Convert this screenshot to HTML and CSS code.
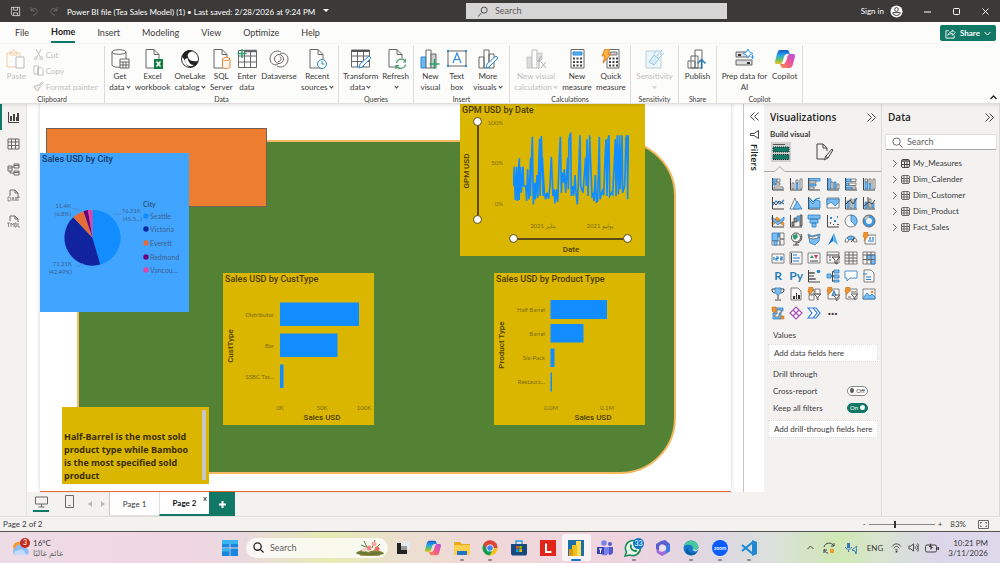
FILE: index.html
```html
<!DOCTYPE html>
<html lang="en">
<head>
    <meta charset="UTF-8">
    <meta name="viewport" content="width=device-width, initial-scale=1.0">
    <title>Power BI file (Tea Sales Model) (1)</title>
    <link rel="stylesheet" href="styles.css">
</head>
<body>
    <!-- Title bar -->
    <header class="titlebar">
        <div class="quick">
            <button aria-label="Save"><svg class="i11" viewBox="0 0 16 16"><path class="lw" d="M2 2h12v12H4l-2-2zM5 2v4h6V2M5 14v-4h6v4"/></svg></button>
            <button aria-label="Undo"><svg class="i11 dim" viewBox="0 0 16 16"><path class="lw" d="M3 2v5h5M3 7c3-5 9-4 9 1 0 2-3 4-6 6"/></svg></button>
            <button aria-label="Redo"><svg class="i11 dim" viewBox="0 0 16 16"><path class="lw" d="M13 2v5H8M13 7c-3-5-9-4-9 1 0 2 3 4 6 6"/></svg></button>
            <span class="file-name">Power BI file (Tea Sales Model) (1) • Last saved: 2/28/2026 at 9:24 PM</span>
            <svg class="i6" viewBox="0 0 6 6"><path fill="#fff" d="M0 1h6L3 4z"/></svg>
        </div>
        <label class="top-search">
            <svg class="i11" viewBox="0 0 12 12"><path class="lg" d="M5 7.500L1 11.500M4.500 4.500a3.300 3.300 0 1 0 6.600 0a3.300 3.300 0 1 0-6.600 0"/></svg>
            <input type="text" placeholder="Search" aria-label="Search">
        </label>
        <div class="window-tools">
            <button class="signin">Sign in
                <svg class="i13" viewBox="0 0 14 14"><circle cx="7" cy="7" r="6.500" fill="#fff"/><circle cx="7" cy="4.800" r="2" fill="none" stroke="#333"/><path fill="none" stroke="#333" d="M3 8.200h8c0 4-8 4-8 0z"/></svg>
            </button>
            <button aria-label="Minimize"><svg class="i9" viewBox="0 0 9 9"><path class="lw" d="M1 5h7"/></svg></button>
            <button aria-label="Maximize"><svg class="i9" viewBox="0 0 9 9"><rect class="lw" x="1.500" y="1.500" width="6" height="6" rx="1"/></svg></button>
            <button aria-label="Close"><svg class="i9" viewBox="0 0 9 9"><path class="lw" d="M1.500 1.500l6 6M7.500 1.500l-6 6"/></svg></button>
        </div>
    </header>

    <!-- Menu tabs -->
    <nav class="menu">
        <button>File</button>
        <button class="active">Home</button>
        <button>Insert</button>
        <button>Modeling</button>
        <button>View</button>
        <button>Optimize</button>
        <button>Help</button>
        <button class="share">
            <svg class="i11" viewBox="0 0 12 12"><path fill="none" stroke="#fff" d="M4 3H1v8h9V8M3 8c1-3 3-4 5-4V2l3 3-3 3V6C6 6 4 7 3 8z"/></svg>
            Share
            <svg class="i7" viewBox="0 0 7 7"><path fill="none" stroke="#fff" d="M.5 2l3 3 3-3"/></svg>
        </button>
    </nav>

    <!-- Ribbon -->
    <section class="ribbon">
        <div class="group g-clip off">
            <div class="items">
                <button class="tool">
                    <svg class="i20" viewBox="0 0 20 20"><path fill="none" stroke="#f0cfa8" d="M10 18H1V4h13v4M4 6V3h2c0-3 3-3 3 0h2v3z"/><path fill="#fff" stroke="#bbb" d="M10 8h8v11h-8z"/></svg>
                    Paste
                </button>
                <div class="mini">
                    <button><svg class="i11" viewBox="0 0 12 12"><path fill="none" stroke="#bbb" d="M3 0l5 9M9 0L4 9"/><circle cx="3" cy="10" r="1.500" fill="none" stroke="#bbb"/><circle cx="9" cy="10" r="1.500" fill="none" stroke="#bbb"/></svg>Cut</button>
                    <button><svg class="i11" viewBox="0 0 12 12"><path fill="#fff" stroke="#bbb" d="M1 1h5v9H1zM5 3h4l2 2v6H5z"/></svg>Copy</button>
                    <button><svg class="i11" viewBox="0 0 12 12"><path fill="#eee" stroke="#bbb" d="M7 4l3-3 1 1-3 3zM1 6l5-2 2 2-3 5z"/><path fill="none" stroke="#f0c8a8" d="M1 7l4 4"/></svg>Format painter</button>
                </div>
            </div>
            <h2>Clipboard</h2>
        </div>
        <div class="group g-data">
            <div class="items">
                <button class="tool">
                    <svg class="i20" viewBox="0 0 20 20"><path class="l" d="M2 3v13c0 3 14 3 14 0V3"/><ellipse class="l" cx="9" cy="3" rx="7" ry="2.300"/><path class="w" d="M10 10h9v9h-9zM10 13h9M10 16h9M13 13v6M16 13v6"/></svg>
                    Get<br>data<i class="v"></i>
                </button>
                <button class="tool">
                    <svg class="i20" viewBox="0 0 20 20"><path class="w" d="M3 .5h8l5 5V19H3zM11 .5v5h5"/><path fill="#107c41" d="M11 10h9v10h-9z"/><path stroke="#fff" stroke-width="1.500" d="M13.500 12.500l4 5M17.500 12.500l-4 5"/></svg>
                    Excel<br>workbook
                </button>
                <button class="tool">
                    <svg class="i20" viewBox="0 0 20 20"><circle cx="10" cy="10" r="8.500" fill="#fff" stroke="#333"/><path fill="#222" d="M2 8C3 2 9 0 13 2 9 3 7 5 8 8c1 4 5 5 10 4-1 5-5 7-8 6-4 0-4-7-8-10z"/><path fill="#fff" d="M5 10c2-1 3-1 3 1 1 3 3 5 6 5-4 3-9 0-9-6z"/></svg>
                    OneLake<br>catalog<i class="v"></i>
                </button>
                <button class="tool">
                    <svg class="i20" viewBox="0 0 20 20"><path class="w" d="M3 .5h8l5 5V19H3zM11 .5v5h5"/><path fill="#fdf3e8" stroke="#e08a3c" d="M11.500 10v8c0 2 7.500 2 7.500 0v-8"/><ellipse cx="15.200" cy="10" rx="3.700" ry="1.500" fill="#fff" stroke="#e08a3c"/></svg>
                    SQL<br>Server
                </button>
                <button class="tool">
                    <svg class="i20" viewBox="0 0 20 20"><path class="w" d="M1.500 1.500h18v17h-18zM1.500 7h18M1.500 13h18M7.500 1.500v17M13.500 1.500v17"/><path d="M7.500 2h12" stroke="#666" stroke-width="2.500"/><path d="M5 0v9M.5 4.500h9" stroke="#2aa56b" stroke-width="1.500"/></svg>
                    Enter<br>data
                </button>
                <button class="tool">
                    <svg class="i20" viewBox="0 0 20 20"><path class="l" d="M12 3C7 0 1 4 1 10c0 5 6 8 9 4M8 17c5 3 11-1 11-7 0-5-6-8-9-4"/><circle class="l" cx="10" cy="10" r="4.500"/><path class="l" d="M11 7.500c2 2 1 5-2 5"/></svg>
                    Dataverse
                </button>
                <button class="tool">
                    <svg class="i20" viewBox="0 0 20 20"><path class="w" d="M3 .5h8l5 5V19H3zM11 .5v5h5"/><circle cx="15" cy="15" r="4.500" fill="#fff" stroke="#2b88a8"/><path d="M15 12v3h2.500" fill="none" stroke="#2b88a8"/></svg>
                    Recent<br>sources<i class="v"></i>
                </button>
            </div>
            <h2>Data</h2>
        </div>
        <div class="group g-queries">
            <div class="items">
                <button class="tool">
                    <svg class="i20" viewBox="0 0 20 20"><path class="w" d="M.5 1h18v17H.5zM.5 7h18M.5 12.500h18M6.500 1v17M12.500 1v17"/><path d="M.5 2h18" stroke="#555" stroke-width="2"/><path fill="#fff" stroke="#2b88d8" d="M8 19l1-4 9-8 2 2-9 9z"/></svg>
                    Transform<br>data<i class="v"></i>
                </button>
                <button class="tool">
                    <svg class="i20" viewBox="0 0 20 20"><path class="w" d="M3 .5h8l5 5V18H3zM11 .5v5h5"/><circle cx="15" cy="14.500" r="5.500" fill="#fcfcfb"/><path d="M10.500 14c1-5 8-5 9-1M20 9.500V13h-3M19.500 15.500c-1 5-8 5-9 1M10 20v-3.500h3" fill="none" stroke="#4a9d6b" stroke-width="1.200"/></svg>
                    Refresh<br><i class="v"></i>
                </button>
            </div>
            <h2>Queries</h2>
        </div>
        <div class="group g-insert">
            <div class="items">
                <button class="tool">
                    <svg class="i20" viewBox="0 0 20 20"><path fill="#6cb8f0" stroke="#2b88d8" d="M1 8h5v11H1z"/><path class="w" d="M6 1h5v18H6z"/><path fill="#ccc" stroke="#666" d="M11 5h5v14h-5z"/><path d="M14.500 10v10M9.500 15h10" stroke="#2aa56b" stroke-width="1.500"/></svg>
                    New<br>visual
                </button>
                <button class="tool">
                    <svg class="i20" viewBox="0 0 20 20"><path class="w" d="M1 2h18v15H1z"/><path d="M6 14l4-10 4 10M7.500 10.500h5" fill="none" stroke="#2b88d8" stroke-width="1.200"/><path fill="#2b88d8" d="M0 1h2v2H0zM18 1h2v2h-2zM0 16h2v2H0zM18 16h2v2h-2z"/></svg>
                    Text<br>box
                </button>
                <button class="tool">
                    <svg class="i20" viewBox="0 0 20 20"><path class="w" d="M1 8h5v11H1zM6 1h5v18H6zM11 5h5v14h-5z"/><path fill="#fff" stroke="#2b88d8" d="M8 19l1-4 9-8 2 2-9 9z"/></svg>
                    More<br>visuals<i class="v"></i>
                </button>
            </div>
            <h2>Insert</h2>
        </div>
        <div class="group g-calc">
            <div class="items">
                <button class="tool off">
                    <svg class="i20" viewBox="0 0 20 20"><path fill="#ddd" stroke="#c8c8c8" d="M1 8h5v11H1z"/><path fill="#fff" stroke="#bbb" d="M6 1h5v18H6z"/><path fill="#ddd" stroke="#c8c8c8" d="M11 4h5v7h-5z"/><path fill="none" stroke="#aaa" d="M16 8c-3-1-3 3-3 11-1 2-2 1-2 1M11 12h4M15 13l5 6M20 13l-5 6"/></svg>
                    New visual<br>calculation<i class="v"></i>
                </button>
                <button class="tool">
                    <svg class="i20" viewBox="0 0 20 20"><path class="w" d="M4 .5h13V19H4z"/><path fill="#59b0f0" stroke="#2b88d8" d="M6 3h9v3H6z"/><path stroke="#444" stroke-width="2" stroke-dasharray="2 1.500" d="M6 9.500h9M6 13h9M6 16.500h9"/></svg>
                    New<br>measure
                </button>
                <button class="tool">
                    <svg class="i20" viewBox="0 0 20 20"><path class="w" d="M6 .5h12V19H6z"/><path fill="#ccc" stroke="#777" d="M9 3h7v3H9z"/><path stroke="#444" stroke-width="2" stroke-dasharray="2 1.500" d="M8 9.500h9M8 13h9M8 16.500h9"/><path fill="#fbb040" stroke="#e07b20" d="M4 0h5L7 5h3l-8 9 2-7H1z"/></svg>
                    Quick<br>measure
                </button>
            </div>
            <h2>Calculations</h2>
        </div>
        <div class="group g-sens">
            <div class="items">
                <button class="tool off">
                    <svg class="i20" viewBox="0 0 20 20"><path fill="#eef5f8" stroke="#bcd0da" d="M2 2h15v17H2z"/><path fill="#d6ecf7" stroke="#98c8e2" d="M5 13l5-7 5 4-5 6zM10 5l3-4M13 7l5-6M15 9l5-5"/></svg>
                    Sensitivity<br><i class="v"></i>
                </button>
            </div>
            <h2>Sensitivity</h2>
        </div>
        <div class="group g-share">
            <div class="items">
                <button class="tool">
                    <svg class="i20" viewBox="0 0 20 20"><path class="w" d="M8 1h7v18H8zM4 7h7v12H4zM1 12h7v7H1z"/><path d="M14.500 20v-9M10.500 14.500l4-4 4 4" fill="none" stroke="#2b7cb8" stroke-width="1.500"/></svg>
                    Publish
                </button>
            </div>
            <h2>Share</h2>
        </div>
        <div class="group g-copilot">
            <div class="items">
                <button class="tool">
                    <svg class="i20" viewBox="0 0 20 20"><path fill="#ddd" stroke="#666" d="M2 3h13v5H2zM2 11h16v5H2z"/><path fill="#333" d="M4 5h3v2H4zM13 13h3v2h-3z"/><path fill="#fff" stroke="#3a9be0" d="M14 0l1.500 3L19 4.500 15.500 6 14 9l-1.500-3L9 4.500 12.500 3zM18.500 6v4M16.500 8h4"/></svg>
                    Prep data for<br>AI
                </button>
                <button class="tool">
                    <svg class="i20" viewBox="0 0 20 20"><use href="#copilot"/></svg>
                    Copilot
                </button>
            </div>
            <h2>Copilot</h2>
        </div>
        <button class="collapse" aria-label="Collapse ribbon"><svg class="i7" viewBox="0 0 7 7"><path fill="none" stroke="#222" stroke-width="1.300" d="M.5 5l3-3 3 3"/></svg></button>
    </section>

    <main class="workspace">
        <!-- View switcher -->
        <nav class="views">
            <button class="active" aria-label="Report view"><svg class="i13" viewBox="0 0 13 13"><path class="d" d="M1.500 1v10.500H12"/><path fill="#444" d="M3 5h2v5H3zM6 3h2v7H6zM9 6h1v4H9zM10 2h2v8h-2z"/></svg></button>
            <button aria-label="Table view"><svg class="i13" viewBox="0 0 13 13"><path class="l" d="M1 2h11v10H1zM1 5h11M1 8.500h11M4.500 2v10M8.500 2v10"/></svg></button>
            <button aria-label="Model view"><svg class="i13" viewBox="0 0 13 13"><path class="l" d="M1 3h4v5H1zM7 1h5v4H7zM7 8h5v4H7zM5 4h2M3 8v2h4M1 5h4M7 2.500h5M7 9.500h5"/></svg></button>
            <button aria-label="DAX query view"><svg class="i13" viewBox="0 0 13 13"><path class="l" d="M3 7V1h5l3 3v5M8 1v3h3"/><path class="t" d="M1 8h2l1 2-1 2H1zM5 12l1-4 1 4M8 8l2 4M10 8l-2 4M11 12V8h2"/></svg></button>
            <button aria-label="TMDL view"><svg class="i13" viewBox="0 0 13 13"><path class="l" d="M3 6V1h5l3 3v3M8 1v3h3"/><path class="t" d="M0 8h3M1.500 8v4M4 12V8l1.500 2L7 8v4M8 8h1l1 2-1 2H8zM11 8v4h2"/></svg></button>
        </nav>

        <div class="center">
            <div class="stage">
                <div class="page">
                    <div class="shape-green"></div>
                    <div class="shape-orange"></div>

                    <article class="visual city">
                        <h3>Sales USD by City</h3>
                        <svg class="plot" viewBox="0 0 149 159">
                            <path fill="#118dff" d="M52.500 84.700V56.700A28 28 0 0 1 60.300 111.600z"/>
                            <path fill="#12239e" d="M52.500 84.700L60.300 111.600A28 28 0 0 1 33.300 64.300z"/>
                            <path fill="#e66c37" d="M52.500 84.700L33.300 64.300A28 28 0 0 1 43.500 58.200z"/>
                            <path fill="#6b007b" d="M52.500 84.700L43.500 58.200A28 28 0 0 1 47.900 57.100z"/>
                            <path fill="#e044a7" d="M52.500 84.700L47.900 57.100A28 28 0 0 1 52.500 56.700z"/>
                            <path fill="none" stroke="#5588bb" stroke-width=".7" d="M32 56h5l3 2M73 61h8M36 113h4l3-3"/>
                            <g class="axis">
                                <text x="31" y="55" text-anchor="end">11.4K</text>
                                <text x="31" y="63" text-anchor="end">(6.8%)</text>
                                <text x="101" y="60" text-anchor="end">76.31K</text>
                                <text x="102" y="68" text-anchor="end">(45.5...)</text>
                                <text x="32" y="113" text-anchor="end">71.21K</text>
                                <text x="32" y="121" text-anchor="end">(42.49%)</text>
                            </g>
                            <g class="legend">
                                <text class="strong" x="103" y="54">City</text>
                                <circle cx="106" cy="63" r="2.700" fill="#118dff"/><text x="110" y="66">Seattle</text>
                                <circle cx="106" cy="76" r="2.700" fill="#12239e"/><text x="110" y="79">Victoria</text>
                                <circle cx="106" cy="90" r="2.700" fill="#e66c37"/><text x="110" y="93">Everett</text>
                                <circle cx="106" cy="104" r="2.700" fill="#6b007b"/><text x="110" y="107">Redmond</text>
                                <circle cx="106" cy="117" r="2.700" fill="#e044a7"/><text x="110" y="120">Vancou...</text>
                            </g>
                        </svg>
                    </article>

                    <article class="visual gpm">
                        <h3>GPM USD by Date</h3>
                        <svg class="plot" viewBox="0 0 185 152">
                            <svg x="53" y="28" width="116" height="74" viewBox="218 108 348 222">
                                <polyline fill="none" stroke="#118dff" stroke-width="5" points="219,270 222,212 225,312 229,212 231,315 235,215 237,187 236,312 241,212 243,290 248,212 250,270 256,270 259,315 262,220 266,310 271,185 270,300 276,122 279,325 283,260 285,310 290,237 292,305 298,128 299,300 303,120 308,300 306,185 312,290 316,310 320,290 325,308 329,270 333,182 338,300 341,280 344,322 348,280 352,318 357,185 360,122 363,290 366,230 369,260 372,220 376,290 382,185 384,280 386,130 391,110 393,300 397,270 400,300 404,237 407,290 411,325 414,260 419,118 421,270 428,290 434,210 436,185 438,270 440,130 443,300 448,118 451,200 455,300 458,295 461,315 465,237 468,318 472,315 477,122 479,310 486,285 490,298 494,190 497,130 500,300 503,130 506,118 508,300 514,290 517,295 522,200 525,130 527,300 531,118 534,295 538,118 540,280 545,118 547,290 553,270 557,125 560,118 562,310 564,118 565,200"/>
                            </svg>
                            <g class="axis">
                                <text x="43" y="21" text-anchor="end">100%</text>
                                <text x="43" y="61" text-anchor="end">50%</text>
                                <text x="43" y="102" text-anchor="end">0%</text>
                                <text x="83" y="124" text-anchor="middle">يناير 2021</text>
                                <text x="140" y="124" text-anchor="middle">يوليو 2021</text>
                            </g>
                            <g class="axis-title">
                                <text x="111" y="148" text-anchor="middle">Date</text>
                                <text transform="translate(9 67) rotate(-90)" text-anchor="middle">GPM USD</text>
                            </g>
                        </svg>
                        <div class="range range-y">
                            <input type="range" value="0" aria-label="GPM USD from">
                            <input type="range" value="100" aria-label="GPM USD to">
                        </div>
                        <div class="range range-x">
                            <input type="range" value="0" aria-label="Date from">
                            <input type="range" value="100" aria-label="Date to">
                        </div>
                    </article>

                    <article class="visual cust">
                        <h3>Sales USD by CustType</h3>
                        <svg class="plot" viewBox="0 0 151 152">
                            <path fill="#118dff" d="M57 29.500h79v23.500H57zM57 60.500h57.500V84H57zM57 91.500h3.500V115H57z"/>
                            <g class="axis">
                                <text x="51" y="44" text-anchor="end">Distributor</text>
                                <text x="51" y="75" text-anchor="end">Bar</text>
                                <text x="51" y="106" text-anchor="end">SSBC Tas...</text>
                                <text x="57" y="137" text-anchor="middle">0K</text>
                                <text x="99" y="137" text-anchor="middle">50K</text>
                                <text x="141" y="137" text-anchor="middle">100K</text>
                            </g>
                            <g class="axis-title">
                                <text x="99" y="147" text-anchor="middle">Sales USD</text>
                                <text transform="translate(10 73) rotate(-90)" text-anchor="middle">CustType</text>
                            </g>
                        </svg>
                    </article>

                    <article class="visual product">
                        <h3>Sales USD by Product Type</h3>
                        <svg class="plot" viewBox="0 0 151 152">
                            <path fill="#118dff" d="M56.500 27H113v19H56.500zM56.500 51h33v18.500h-33zM56.500 75.500h4V94h-4zM56.500 99.500H58v19h-1.500z"/>
                            <g class="axis">
                                <text x="51" y="39" text-anchor="end">Half Barrel</text>
                                <text x="51" y="63" text-anchor="end">Barrel</text>
                                <text x="51" y="87" text-anchor="end">Six-Pack</text>
                                <text x="51" y="111" text-anchor="end">Restaura...</text>
                                <text x="57" y="137" text-anchor="middle">0.0M</text>
                                <text x="113" y="137" text-anchor="middle">0.1M</text>
                            </g>
                            <g class="axis-title">
                                <text x="99" y="147" text-anchor="middle">Sales USD</text>
                                <text transform="translate(10 72) rotate(-90)" text-anchor="middle">Product Type</text>
                            </g>
                        </svg>
                    </article>

                    <div class="visual note">
                        <p>Half-Barrel is the most sold product type while Bamboo is the most specified sold product</p>
                        <span class="scroll"></span>
                    </div>
                </div>

                <aside class="filters">
                    <button aria-label="Expand filters"><svg class="i9" viewBox="0 0 9 9"><path class="d" d="M4.500.5l-4 4 4 4M8.500.5l-4 4 4 4"/></svg></button>
                    <svg class="i9" viewBox="0 0 9 9"><path class="d" d="M8.500.5v8L4 5.500H.5v-2H4z"/></svg>
                    <h2>Filters</h2>
                </aside>
            </div>

            <!-- Page tabs -->
            <footer class="page-tabs">
                <button class="device on" aria-label="Desktop layout"><svg class="i13" viewBox="0 0 13 13"><path class="l" d="M.5 2h12v7H.5zM6.500 9v3M3.500 12h6"/></svg></button>
                <button class="device" aria-label="Mobile layout"><svg class="i13" viewBox="0 0 13 13"><path class="l" d="M2.500.5h8v12h-8zM5.500 10.500h2"/></svg></button>
                <button class="step" aria-label="Previous page"><svg class="i6" viewBox="0 0 6 6"><path fill="#bbb" d="M5 0v6L1 3z"/></svg></button>
                <button class="step" aria-label="Next page"><svg class="i6" viewBox="0 0 6 6"><path fill="#bbb" d="M1 0v6l4-3z"/></svg></button>
                <button class="tab">Page 1</button>
                <button class="tab current">Page 2<span class="x">x</span></button>
                <button class="add" aria-label="New page"><svg class="i9" viewBox="0 0 9 9"><path stroke="#fff" stroke-width="2" d="M4.500 1v7M1 4.500h7"/></svg></button>
            </footer>
        </div>

        <!-- Visualizations pane -->
        <aside class="pane viz">
            <div class="pane-head">
                <h2>Visualizations</h2>
                <button aria-label="Collapse"><svg class="i9" viewBox="0 0 9 9"><path class="d" d="M.5.5l4 4-4 4M4.500.5l4 4-4 4"/></svg></button>
            </div>
            <p class="build">Build visual</p>
            <div class="modes">
                <button class="picked" aria-label="Build visual"><svg class="i20" viewBox="0 0 20 20"><path d="M2 2.500h12" stroke="#555"/><path fill="#117865" stroke="#222" stroke-dasharray="1 1" d="M2 5h16v5H2zM2 12.500h16v5H2z"/></svg></button>
                <button aria-label="Format visual"><svg class="i20" viewBox="0 0 20 20"><path class="d" d="M10 17H3V2h6l4 4v3M9 2v4h4"/><path class="d" d="M18 7l-6 7-2 4 4-2 5-8zM11 14l3 2"/></svg></button>
            </div>
            <div class="divider"><svg viewBox="0 0 118 7"><path fill="none" stroke="#a8a6a4" d="M0 6.500h11l5-5 5 5h97"/></svg></div>
            <div class="gallery">
                <!-- bars and columns -->
                <svg viewBox="0 0 14 14"><path class="d" d="M1.500 1v12H13"/><path class="b" d="M2 2h4v3H2zM2 6h3v2H2z"/><path class="g" d="M6 2h3v3H6zM5 6h4v2H5zM3 10h9v2H3z"/></svg>
                <svg viewBox="0 0 14 14"><path class="d" d="M1.500 1v12H13"/><path class="g" d="M3 6h2v6H3zM7 3h2v3H7zM11 2h2v10h-2z"/><path class="b" d="M7 6h2v6H7z"/></svg>
                <svg viewBox="0 0 14 14"><path class="d" d="M1.500 1v12H13"/><path class="b" d="M2 1.500h11V4H2zM2 7h7v2H2z"/><path class="g" d="M2 4h7v2H2zM2 10h5v2H2z"/></svg>
                <svg viewBox="0 0 14 14"><path class="d" d="M1.500 1v12H13"/><path class="b" d="M2 2h3v10H2zM8 5h2v7H8z"/><path class="g" d="M5 5h2v7H5zM11 7h2v5h-2z"/></svg>
                <svg viewBox="0 0 14 14"><path class="d" d="M1.500 1v12H13"/><path class="b" d="M2 2h5v2.500H2zM2 6h3v2.500H2zM2 10h6v2H2z"/><path class="g" d="M7 2h5v2.500H7zM5 6h7v2.500H5zM8 10h4v2H8z"/></svg>
                <svg viewBox="0 0 14 14"><path class="d" d="M1.500 1v12H13"/><path class="g" d="M3 2h2.500v3H3zM7 2h2v5H7zM11 2h2v10h-2z"/><path class="b" d="M3 5h2.500v7H3zM7 7h2v5H7z"/></svg>
                <!-- lines and areas -->
                <svg viewBox="0 0 14 14"><path class="d" d="M1.500 1v12H13"/><path class="s" d="M2 9l3-4 4 3 4-4"/><path class="d" d="M2 6l3 3 3-4 5 3"/></svg>
                <svg viewBox="0 0 14 14"><path class="g" d="M1 13l5-11 4 11z"/><path class="b" d="M4 13l4-8 5 8z"/></svg>
                <svg viewBox="0 0 14 14"><path class="d" d="M1.500 1v12H13"/><path class="b" d="M2 4l4 4 3-4 4 1v7H2z"/><path class="s" d="M2 2l4 4 3-3 4-1"/></svg>
                <svg viewBox="0 0 14 14"><path class="g" d="M1 2h12v10H1z"/><path class="b" d="M1 3h12v3L9 10 5 6l-4 3z"/></svg>
                <svg viewBox="0 0 14 14"><path class="d" d="M1.500 1v12H13"/><path class="b" d="M3 5h2v7H3zM10 3h2v9h-2z"/><path class="g" d="M6 3h2v9H6z"/><path class="d" d="M2 8l4-4 3 4 4-6"/></svg>
                <svg viewBox="0 0 14 14"><path class="d" d="M1.500 1v12H13M6 1v11"/><path class="b" d="M3 6h2v6H3zM10 7h2v5h-2z"/><path class="g" d="M7 3h2v9H7z"/><path class="d" d="M2 10l5-4 3 2 3-4"/></svg>
                <!-- ribbon to donut -->
                <svg viewBox="0 0 14 14"><path class="o" d="M1 8l5-5 7 6v3L6 7l-5 5z"/><path class="b" d="M1 3l6 5 6-5v3l-6 5-6-5z"/><path class="d" d="M1.500 1v12H13"/></svg>
                <svg viewBox="0 0 14 14"><path class="d" d="M1.500 1v12H13"/><path class="k" d="M3 8h2v4H3zM5 4h3v4H5zM11 1h2v11h-2z"/><path class="b" d="M8 2h2v5H8z"/></svg>
                <svg viewBox="0 0 14 14"><path class="b" d="M1 1h12v4H1zM3 5h8v4H3zM5 9h4v4H5z"/></svg>
                <svg viewBox="0 0 14 14"><path class="d" d="M1.500 1v12H13"/><path fill="#2b88d8" d="M4 3h2v2H4zM8 6h2v2H8zM11 2h1v2h-1z"/><path fill="#555" d="M4 8h1v2H4zM7 10h1v1H7zM11 10h2v1h-2z"/></svg>
                <svg viewBox="0 0 14 14"><circle class="g" cx="7" cy="7" r="6"/><path class="b" d="M7 1a6 6 0 0 1 4 10.500L7 7z"/></svg>
                <svg viewBox="0 0 14 14"><circle cx="7" cy="7" r="4.500" fill="none" stroke="#3c9ae6" stroke-width="3"/><path d="M3 5a4.500 4.500 0 0 1 4-2.500" fill="none" stroke="#bbb" stroke-width="3"/><circle class="l" cx="7" cy="7" r="6"/></svg>
                <!-- maps and gauges -->
                <svg viewBox="0 0 14 14"><path class="b" d="M1 1h6v8H1zM7 1h2v4H7z"/><path class="g" d="M9 1h4v6H9zM1 9h8v4H1zM9 7h4v6H9z"/><path class="b" d="M3 9h3v4H3z"/></svg>
                <svg viewBox="0 0 14 14"><circle cx="7" cy="5.500" r="4.500" fill="#fff" stroke="#444"/><path fill="#2d9c6c" d="M4 3l4-1 1 3-3 3-2-2z"/><path class="d" d="M12 2c2 4 0 9-5 9v2M4 13h6"/></svg>
                <svg viewBox="0 0 14 14"><path class="b" d="M1 2l4 2 4-1 4-1-1 7-4 4-5-2z"/><path class="g" d="M2 4l4 1 5-2v3l-5 1-4-1z"/></svg>
                <svg viewBox="0 0 14 14"><path fill="#1b74c5" d="M8 1L2 13l5-4z"/><path fill="#4fb3ef" d="M8 1l4 12-5-4z"/></svg>
                <svg viewBox="0 0 14 14"><path class="g" d="M1 10a6 6 0 0 1 12 0h-3a3 3 0 0 0-6 0z"/><path class="b" d="M3 6a6 6 0 0 1 8 0l-2 2a3 3 0 0 0-4 0z"/><path class="d" d="M7 10l3-4"/></svg>
                <svg viewBox="0 0 14 14"><path class="g" d="M3 3h11v9H3z"/><path class="s" d="M6 9h6M8 5v3M11 5v3"/><path class="o" d="M2 0h4L5 3h2l-5 6 1-4H1z"/></svg>
                <!-- cards and tables -->
                <svg viewBox="0 0 14 14"><path class="g" d="M1 3h12v9H1z"/><path class="s" d="M3 6v3M5 6h2v1.500H5V9h2M9 6h2v3H9M9 7.500h2"/></svg>
                <svg viewBox="0 0 14 14"><path class="g" d="M1 1h12v12H1z"/><path class="s" d="M4 4h4M4 7h7M4 10h6"/><path class="d" d="M2.500 2v10"/></svg>
                <svg viewBox="0 0 14 14"><path class="g" d="M1 2h12v10H1z"/><path fill="#2d9c6c" d="M3 7l2-3 2 3z"/><path fill="#d6394b" d="M7 4h4L9 8z"/><path class="d" d="M3 10h8"/></svg>
                <svg viewBox="0 0 14 14"><path class="g" d="M1 1h12v11H1z"/><path class="d" d="M1 4h12M3 6h2M3 9h2M6 6h8l-3 3v4l-2-1V9z"/></svg>
                <svg viewBox="0 0 14 14"><path class="g" d="M1 1h12v12H1z"/><path class="l" d="M1 4h12M1 7h12M1 10h12M5 1v12M9 1v12"/></svg>
                <svg viewBox="0 0 14 14"><path class="g" d="M1 1h12v12H1z"/><path class="b" d="M5 4h8v9H9V9H5z"/><path class="l" d="M1 4h12M1 8.500h12M5 1v12M9 1v12"/></svg>
                <!-- scripts and AI visuals -->
                <b class="glyph">R</b>
                <b class="glyph">Py</b>
                <svg viewBox="0 0 14 14"><path class="d" d="M1.500 1v12H13M2 4h6M2 7h5M2 10h7"/><path stroke="#777" stroke-width="2" d="M2 4h5M2 10h6"/><circle cx="11.500" cy="2.500" r="1.800" fill="#2b88d8"/></svg>
                <svg viewBox="0 0 14 14"><path class="b" d="M1 5h4v4H1zM8 1h5v3H8zM8 6h5v3H8zM8 11h5v2H8z"/><path class="d" d="M5 7h3M6.500 2.500v10M6.500 2.500H8M6.500 12H8"/></svg>
                <svg viewBox="0 0 14 14"><path fill="#fff" stroke="#4a90c8" d="M1 2h12v7H6l-3 3V9H1z"/></svg>
                <svg viewBox="0 0 14 14"><path class="g" d="M2 1h7l3 3v9H2z"/><path class="s" d="M1 5h4M4 8h5M4 10.500h5"/></svg>
                <!-- goals and slicers -->
                <svg viewBox="0 0 14 14"><path class="b" d="M4 1h6c0 4 0 6-3 7-3-1-3-3-3-7z"/><path class="d" d="M4 2H1c0 3 1 4 3 4M10 2h3c0 3-1 4-3 4M7 8v4M4 13h6"/></svg>
                <svg viewBox="0 0 14 14"><path class="g" d="M2 1h7l3 3v9H2z"/><path fill="#333" d="M4 9h2v3H4zM7 6h1v6H7zM9 8h2v4H9z"/></svg>
                <svg viewBox="0 0 14 14"><path class="g" d="M2 2h5v5H2zM8 2h5v5H8zM2 8h5v5H2z"/><path class="l" d="M7 7h7l-3 3v3l-1-1v-2z"/><path class="o" d="M2 0h4L5 3h2l-5 5 1-3H1z"/></svg>
                <svg viewBox="0 0 14 14"><path class="g" d="M2 2h11v10H2z"/><path class="s" d="M6 9l2-5 2 5"/><path class="l" d="M7 8h7l-3 3v3l-1-1v-2z"/><path class="o" d="M2 0h4L5 3h2l-5 5 1-3H1z"/></svg>
                <svg viewBox="0 0 14 14"><path class="g" d="M2 2h11v10H2z"/><path class="l" d="M7 5h5M4 10h3M7 7h7l-3 3v3l-1-1v-2z"/><path class="o" d="M2 0h4L5 3h2l-5 5 1-3H1z"/></svg>
                <svg viewBox="0 0 14 14"><path class="g" d="M1 2h12v10H1z"/><path class="b" d="M1 11l4-5 3 3 2-2 3 3v2H1z"/><circle class="o" cx="10" cy="5" r="1"/></svg>
                <!-- custom visuals -->
                <svg viewBox="0 0 14 14"><path class="b" d="M4 2h8v3h-2v8H2V7h2z"/><path class="g" d="M6 4h4v3H8v4H4V8h2z"/><path class="o" d="M1 1h4v4L3 7 1 5zM10 10h3v3h-3z"/></svg>
                <svg viewBox="0 0 14 14"><path fill="#fff" stroke="#a44cb4" stroke-width="1.200" d="M7 1l6 6-6 6-6-6zM4 4l6 6M10 4l-6 6"/></svg>
                <svg viewBox="0 0 14 14"><path fill="#fff" stroke="#2f7de0" stroke-width="1.200" d="M1 2h5l4 5-4 5H1l4-5zM6 2h3l4 5-4 5H6"/></svg>
                <b class="more">···</b>
            </div>
            <div class="wells">
                <h3>Values</h3>
                <button class="well">Add data fields here</button>
                <h3>Drill through</h3>
                <label class="row">Cross-report<input type="checkbox"><span class="toggle"></span></label>
                <label class="row">Keep all filters<input type="checkbox" checked><span class="toggle"></span></label>
                <button class="well">Add drill-through fields here</button>
            </div>
        </aside>

        <!-- Data pane -->
        <aside class="pane data">
            <div class="pane-head">
                <h2>Data</h2>
                <button aria-label="Collapse"><svg class="i9" viewBox="0 0 9 9"><path class="d" d="M.5.5l4 4-4 4M4.500.5l4 4-4 4"/></svg></button>
            </div>
            <label class="find">
                <svg class="i11" viewBox="0 0 12 12"><circle cx="5" cy="5" r="4" fill="none" stroke="#605e5c"/><path stroke="#605e5c" d="M8 8l3.500 3.500"/></svg>
                <input type="text" placeholder="Search" aria-label="Search fields">
            </label>
            <ul class="tables">
                <li><svg class="i7" viewBox="0 0 7 7"><path class="l" d="M2 0l3.500 3.500L2 7"/></svg><svg class="i9" viewBox="0 0 9 9"><rect class="d" x=".5" y=".5" width="8" height="8" rx="1.500"/><path fill="#777" d="M1 1h7v2H1z"/><path class="d" d="M1 5.500h7M3.500 3v5M6 3v5"/></svg>My_Measures</li>
                <li><svg class="i7" viewBox="0 0 7 7"><path class="l" d="M2 0l3.500 3.500L2 7"/></svg><svg class="i9" viewBox="0 0 9 9"><use href="#tbl"/></svg>Dim_Calender</li>
                <li><svg class="i7" viewBox="0 0 7 7"><path class="l" d="M2 0l3.500 3.500L2 7"/></svg><svg class="i9" viewBox="0 0 9 9"><use href="#tbl"/></svg>Dim_Customer</li>
                <li><svg class="i7" viewBox="0 0 7 7"><path class="l" d="M2 0l3.500 3.500L2 7"/></svg><svg class="i9" viewBox="0 0 9 9"><use href="#tbl"/></svg>Dim_Product</li>
                <li><svg class="i7" viewBox="0 0 7 7"><path class="l" d="M2 0l3.500 3.500L2 7"/></svg><svg class="i9" viewBox="0 0 9 9"><use href="#tbl"/></svg>Fact_Sales</li>
            </ul>
        </aside>
    </main>

    <!-- Status bar -->
    <div class="status">
        <span>Page 2 of 2</span>
        <div class="zoom">
            <span>-</span>
            <input type="range" min="0" max="100" value="40" aria-label="Zoom">
            <span>+</span>
            <span class="pct">83%</span>
            <button aria-label="Fit to page"><svg class="i11" viewBox="0 0 11 11"><path class="l" d="M.5 1.500h10v8H.5z"/><path class="d" d="M2.500 4.500v-1h1M7.500 3.500h1v1M8.500 6.500v1h-1M3.500 7.500h-1v-1"/></svg></button>
        </div>
    </div>

    <!-- Taskbar -->
    <footer class="taskbar">
        <button class="weather">
            <svg class="i20" viewBox="0 0 20 20"><circle cx="7" cy="9" r="5" fill="#f79a2e"/><path fill="#8fbcf5" d="M4 17a4 4 0 0 1 0-7c2-5 9-4 10 0 5 0 5 7 1 7z"/><path fill="#c4dcfb" d="M4 17c-2-2 0-5 3-4 2-3 7-1 7 2 2 0 2 2 1 2z"/><circle cx="14" cy="5" r="5" fill="#c42b1c"/><text class="badge" x="14" y="7" text-anchor="middle">3</text></svg>
            <span>16°C<br><em lang="ar" dir="rtl">غائم غالبًا</em></span>
        </button>
        <button class="app" aria-label="Start"><svg class="i16" viewBox="0 0 16 16"><path fill="#1a86dd" d="M0 0h7.600v7.600H0zM8.400 0H16v7.600H8.400zM0 8.400h7.600V16H0zM8.400 8.400H16V16H8.400z"/><path fill="#35b4f0" d="M0 0h7.600v4H0zM8.400 0H16v4H8.400zM0 8.400h7.600v3H0z"/></svg></button>
        <label class="task-search">
            <svg class="i11" viewBox="0 0 12 12"><circle cx="5" cy="5" r="4" fill="none" stroke="#222" stroke-width="1.400"/><path stroke="#222" stroke-width="1.400" d="M8 8l3.500 3.500"/></svg>
            <input type="text" placeholder="Search" aria-label="Search Windows">
            <svg class="flowers" viewBox="0 0 30 17"><path fill="#7a8a3c" d="M1 14c4-4 8-3 12-1 6-3 12-2 16 1-2 4-24 4-28 0z"/><path stroke="#b58a50" stroke-width="1.500" d="M3 14h24M5 16h20"/><path fill="none" stroke="#4d7d3c" d="M13 10L9 2M17 9l3-8M20 10l5-5M11 8L6 6"/><circle cx="14" cy="9" r="2.500" fill="#f08a80"/><circle cx="19" cy="5" r="2.500" fill="#f6a8a0"/><circle cx="22" cy="10" r="2.500" fill="#e8705c"/><circle cx="9" cy="11" r="2" fill="#fbd0c8"/><path fill="#6a7a34" d="M1 14c5-2 9-1 13 0 5-2 10-1 15 0-4 3-24 3-28 0z"/></svg>
        </label>
        <div class="apps">
            <button class="app" aria-label="Task view"><svg class="i16" viewBox="0 0 16 16"><path fill="#222" d="M1 3h10v11H1z"/><path fill="#e8e8e8" d="M5 1h9v9H5z"/><path fill="#999" d="M5 6h6v4H5z"/></svg></button>
            <button class="app" aria-label="Copilot"><svg class="i16" viewBox="0 0 20 20">
                <defs>
                    <linearGradient id="cpA" x1="0" y1="0" x2="0" y2="1"><stop offset="0" stop-color="#1858c8"/><stop offset=".4" stop-color="#28a8e8"/><stop offset=".7" stop-color="#68c060"/><stop offset="1" stop-color="#f0c020"/></linearGradient>
                    <linearGradient id="cpB" x1="1" y1="0" x2="0" y2="1"><stop offset="0" stop-color="#b050e8"/><stop offset=".5" stop-color="#f05890"/><stop offset="1" stop-color="#f89048"/></linearGradient>
                    <g id="copilot"><path fill="url(#cpA)" d="M5 1h7c2 0 2 2 3 4h-3c-2 0-3 2-4 6-1 3-1 4-3 4H2c-3 0-2-3-1-6 1-5 2-8 4-8z"/><path fill="url(#cpB)" d="M15 19H8c-2 0-2-2-3-4h3c2 0 3-2 4-6 1-3 1-4 3-4h3c3 0 2 3 1 6-1 5-2 8-4 8z"/></g>
                    <g id="tbl"><rect class="l" x=".5" y=".5" width="8" height="8" rx="1.500"/><path class="l" d="M.5 3.500h8M.5 6h8M3 .5v8M6 .5v8"/></g>
                </defs>
                <use href="#copilot"/></svg></button>
            <button class="app run" aria-label="File Explorer"><svg class="i16" viewBox="0 0 16 16"><path fill="#e8a820" d="M0 2h6l2 2h8v5H0z"/><path fill="#fccf4d" d="M0 5h16v10H0z"/><path fill="#1f74c8" d="M3 11h10v4H3z"/></svg></button>
            <button class="app run" aria-label="Chrome"><svg class="i16" viewBox="0 0 16 16"><circle cx="8" cy="8" r="7.500" fill="#fbc116"/><path fill="#db4437" d="M8 8H15.500A7.500 7.500 0 0 0 1.500 4.300L5 10z"/><path fill="#0f9d58" d="M8 8L1.500 4.300A7.500 7.500 0 0 0 7.500 15.500L11 10z"/><path fill="#db4437" d="M8 4.500h6.600A7.500 7.500 0 0 0 1.500 4.300L4.500 9z"/><circle cx="8" cy="8" r="3.600" fill="#fff"/><circle cx="8" cy="8" r="2.800" fill="#4285f4"/></svg></button>
            <button class="app" aria-label="Store"><svg class="i16" viewBox="0 0 16 16"><path fill="none" stroke="#2a9ad8" stroke-width="1.400" d="M5 4V1h6v3"/><path fill="#174a7c" d="M0 4h16v9c0 2-1 2.500-2 2.500H2C1 15.500 0 15 0 13z"/><path fill="#f25022" d="M5 6h2.700v2.700H5z"/><path fill="#7fba00" d="M8.300 6H11v2.700H8.300z"/><path fill="#00a4ef" d="M5 9.300h2.700V12H5z"/><path fill="#ffb900" d="M8.300 9.300H11V12H8.300z"/></svg></button>
            <button class="app" aria-label="Lenovo"><svg class="i16" viewBox="0 0 16 16"><path fill="#e1251b" d="M0 0h16v16H0z"/><path fill="none" stroke="#fff" stroke-width="2" d="M6 3.500V12h5.500"/></svg></button>
            <button class="app here" aria-label="Power BI"><svg class="i16" viewBox="0 0 16 16"><path fill="#1e6fa8" d="M0 0h16v16H0z"/><path fill="#fbdd58" d="M8 1h5v15H8z"/><path fill="#f2c01c" d="M4 5h5v11H4z"/><path fill="#d99a10" d="M1 9h4v7H1z"/></svg></button>
            <button class="app" aria-label="Teams"><svg class="i16" viewBox="0 0 16 16"><circle cx="7" cy="3" r="2.800" fill="#7b83eb"/><circle cx="13" cy="4" r="2" fill="#5059c9"/><path fill="#5059c9" d="M10 7h6v5c0 2-2 3-4 3z"/><path fill="#7b83eb" d="M3 7h9v5c0 4-8 5-9 0z"/><path fill="#3b45b0" d="M0 7h7v7H0z"/><path stroke="#fff" d="M2 9h3M3.500 9v4"/></svg></button>
            <button class="app run" aria-label="WhatsApp"><svg class="i20" viewBox="0 0 20 20"><path fill="#e8f5e9" stroke="#1f8a5b" stroke-width="1.600" d="M1 18l1.500-4A7.500 7.500 0 1 1 6 17z"/><path fill="#1f8a5b" d="M6 7c1-2 2 0 2 1l-.5 1c1 2 2 3 3.500 3l1-.5c2 1 1 2.500-.500 2.500C8 14 5 10 6 7z"/><circle cx="14.500" cy="5.500" r="5.500" fill="#0f78c8"/><text class="badge" x="14.500" y="8" text-anchor="middle">33</text></svg></button>
            <button class="app" aria-label="Microsoft 365"><svg class="i16" viewBox="0 0 16 16"><path fill="#5b5fd0" d="M6 1l4-1 5 4v7l-4 2V6L7 4 4 6v5L1 9V4z"/><path fill="#a06ad8" d="M1 9l3 2 3 1 4-2v4l-4 2-5-3z"/><path fill="#3a7de0" d="M11 6l4-2v7l-4 3z"/><circle cx="8" cy="8" r="2.500" fill="#efe4f2"/></svg></button>
            <button class="app run" aria-label="Edge"><svg class="i16" viewBox="0 0 16 16"><circle cx="8" cy="8" r="7.500" fill="#1678c8"/><path fill="#45c8a0" d="M1 6C3-1 15-1 15.500 7c0 3-4 4-6 2 2-3-3-6-8.500-3z"/><path fill="#0c59a4" d="M5 8c0 5 5 6 9 4-3 5-11 4-11-2z"/><path fill="#fff" d="M9.500 9c2 2 5 1 6-1 0 4-5 4-6 1z"/></svg></button>
            <button class="app run" aria-label="Zoom"><svg class="i16" viewBox="0 0 16 16"><circle cx="8" cy="8" r="8" fill="#0b5cff"/><text class="badge tiny" x="8" y="10" text-anchor="middle">zoom</text></svg></button>
            <button class="app run" aria-label="Visual Studio Code"><svg class="i16" viewBox="0 0 16 16"><path fill="#1f8ad2" d="M11 0l5 2v12l-5 2z"/><path fill="none" stroke="#1f8ad2" stroke-width="2.200" d="M12 2L1 11M1 5l11 9"/></svg></button>
        </div>
        <div class="tray">
            <svg class="i9" viewBox="0 0 9 9"><path class="d" d="M1.500 6l3-3 3 3"/></svg>
            <svg class="i12" viewBox="0 0 12 12"><path class="d" d="M1 5c1-5 8-5 10-1M11 1v3H8M1 7c0 2 2 4 4 4M1 11V8h3"/><path fill="#f59b2c" d="M7 7h4v4H7z"/></svg>
            <svg class="i12" viewBox="0 0 12 12"><path fill="#3d78b8" d="M2 1h3v5H2z"/><path fill="none" stroke="#3d78b8" d="M.5 5c0 3 6 3 6 0M3.500 8v2M12 4l-5 4 3 1 1 3z"/></svg>
            <span class="lang">ENG</span>
            <svg class="i11" viewBox="0 0 12 12"><path class="d" d="M1 5c3-4 7-4 10 0M3 7c2-3 4-3 6 0M4.500 9c1-1 2-1 3 0"/><circle cx="6" cy="10.500" r="1" fill="#333"/></svg>
            <svg class="i11" viewBox="0 0 12 12"><path class="d" d="M1 4.500h2L6 2v8L3 7.500H1zM7.500 4.500c1 1 1 2 0 3M9 3c2 2 2 4 0 6M10.500 1.500c2 3 2 6 0 9"/></svg>
            <svg class="battery" viewBox="0 0 14 10"><rect class="d" x=".5" y="2" width="11" height="7" rx="1.500"/><path stroke="#333" stroke-width="1.500" d="M13.200 4v3"/><path fill="#333" d="M6 0L4 4h1.500v3L8 4H6.500z"/></svg>
            <time>10:21 PM<br>3/11/2026</time>
        </div>
    </footer>
</body>
</html>
```

FILE: styles.css
```css
* {
    box-sizing: border-box;
}

body {
    margin: 0;
    height: 100vh;
    display: flex;
    flex-direction: column;
    overflow: hidden;
    font-family: Lato, "Open Sans", "DejaVu Sans", sans-serif;
    font-size: 8px;
    line-height: 10px;
    color: #3b3a39;
    background: #f3f2f1;
}

button, input {
    font: inherit;
    color: inherit;
    background: none;
    border: 0;
    padding: 0;
    margin: 0;
    outline: 0;
}

button {
    display: flex;
    align-items: center;
    justify-content: center;
    white-space: nowrap;
}

h2, h3, p, ul {
    margin: 0;
    padding: 0;
    font-size: inherit;
    font-weight: inherit;
}

svg {
    flex: none;
    display: block;
}

/* icon sizes */
.i6 { width: 6px; height: 6px; }
.i7 { width: 7px; height: 7px; }
.i9 { width: 9px; height: 9px; }
.i11 { width: 11px; height: 11px; }
.i12 { width: 12px; height: 12px; }
.i13 { width: 13px; height: 13px; }
.i16 { width: 16px; height: 16px; }
.i20 { width: 20px; height: 20px; }

/* icon strokes and fills */
.l { fill: none; stroke: #6b6967; }
.d { fill: none; stroke: #444; }
.t { fill: none; stroke: #6b6967; stroke-width: .7; }
.w { fill: #fff; stroke: #666; }
.lw { fill: none; stroke: #fff; }
.lg { fill: none; stroke: #444; }
.b { fill: #79bdf2; stroke: #2f7fc2; stroke-width: .8; }
.g { fill: #f6f6f6; stroke: #666; stroke-width: .8; }
.k { fill: #999; stroke: #444; stroke-width: .8; }
.o { fill: #f0942e; stroke: #c86a10; stroke-width: .5; }
.s { fill: none; stroke: #2b7fc8; stroke-width: 1.2; }

/* title bar */
.titlebar {
    flex: none;
    height: 22px;
    display: flex;
    align-items: center;
    background: #3b3a39;
    color: #fff;
}

.quick {
    flex: 1;
    display: flex;
    align-items: center;
    gap: 8px;
    padding-left: 10px;
}

.quick .file-name {
    padding-top: 2px;
    white-space: nowrap;
}

.dim {
    opacity: .35;
}

.top-search {
    width: 261px;
    height: 16px;
    display: flex;
    align-items: center;
    gap: 7px;
    padding-left: 11px;
    background: #d6d6d6;
    color: #444;
    font-size: 9px;
}

input::placeholder {
    color: #605e5c;
    opacity: 1;
}

.top-search input,
.find input,
.task-search input {
    flex: 1;
    min-width: 0;
}

.window-tools {
    width: 273px;
    display: flex;
    align-items: center;
    justify-content: flex-end;
    gap: 20px;
    padding-right: 10px;
}

.signin {
    gap: 6px;
}

/* menu */
.menu {
    flex: none;
    height: 22px;
    display: flex;
    align-items: stretch;
    gap: 22px;
    padding-left: 15px;
    padding-right: 4px;
    background: #fcfcfb;
    font-size: 9px;
}

.menu .active {
    font-weight: 700;
    color: #222;
    border-bottom: 2px solid #117865;
    margin-bottom: 1px;
    padding-top: 1px;
}

.menu .share {
    margin: 3px 0 3px auto;
    padding: 0 5px;
    gap: 4px;
    border-radius: 2px;
    background: #117865;
    color: #fff;
    font-size: 8px;
    font-weight: 700;
}

/* ribbon */
.ribbon {
    position: relative;
    z-index: 2;
    flex: none;
    height: 60px;
    display: flex;
    background: #fcfcfb;
    border-bottom: 1px solid #e1dfdd;
    box-shadow: 0 1px 3px rgba(0, 0, 0, .12);
}

.group {
    margin-top: 2px;
    padding-top: 3px;
    display: flex;
    flex-direction: column;
    justify-content: space-between;
    border-right: 1px solid #dddbd9;
}

.group h2 {
    font-size: 7px;
    line-height: 8px;
    text-align: center;
}

.items {
    display: flex;
    justify-content: space-evenly;
    align-items: flex-start;
}

.g-clip { width: 105px; }
.g-data { width: 234px; }
.g-queries { width: 75px; }
.g-insert { width: 96px; }
.g-calc { width: 121px; }
.g-sens { width: 48px; }
.g-share { width: 38px; }
.g-copilot { width: 86px; }

.tool {
    display: block;
    line-height: 11px;
    text-align: center;
}

.tool svg {
    margin: 0 auto 2px;
}

.off {
    color: #c0bebc;
}

.off h2 {
    color: #3b3a39;
}

.v {
    display: inline-block;
    width: 3px;
    height: 3px;
    margin: 0 1px 2px 2px;
    border-right: 1px solid;
    border-bottom: 1px solid;
    transform: rotate(45deg);
}

.mini {
    display: flex;
    flex-direction: column;
    gap: 5px;
}

.mini button {
    justify-content: flex-start;
    gap: 2px;
}

.collapse {
    margin-left: auto;
    padding: 0 3px;
    align-self: flex-end;
    height: 12px;
}

/* workspace */
.workspace {
    flex: 1;
    min-height: 0;
    display: flex;
}

.views {
    flex: none;
    width: 27px;
    border-right: 1px solid #e6e4e2;
}

.views button {
    width: 100%;
    height: 26px;
    border-left: 2px solid transparent;
    padding-right: 2px;
}

.views .active {
    border-left-color: #117865;
}

.center {
    flex: 1;
    min-width: 0;
    display: flex;
    flex-direction: column;
}

.stage {
    flex: 1;
    min-height: 0;
    display: flex;
    background: #fff;
}

/* report page, visuals sit freely on it */
.page {
    position: relative;
    flex: 1;
    margin: 0 12px 0 13px;
    background: #fff;
    border-bottom: 1px solid #e8642c;
    box-shadow: 0 -2px 4px rgba(0, 0, 0, .2);
}

.shape-green {
    position: absolute;
    left: 37px;
    top: 36px;
    width: 599px;
    height: 334px;
    background: #548235;
    border: 2px solid #f4b860;
    border-radius: 56px;
}

.shape-orange {
    position: absolute;
    left: 6px;
    top: 24px;
    width: 221px;
    height: 79px;
    background: #ed7d31;
    border: 1px solid #76604f;
}

.visual {
    position: absolute;
    background: #dab600;
    color: #4a3b00;
}

.visual h3 {
    position: absolute;
    left: 2px;
    top: 1px;
    font-family: Roboto, "Open Sans", sans-serif;
    font-size: 9px;
    font-weight: 500;
    line-height: 11px;
    white-space: nowrap;
}

.plot {
    width: 100%;
    height: 100%;
}

.city {
    left: 0;
    top: 49px;
    width: 149px;
    height: 159px;
    background: #41a4ff;
    color: #173a66;
}

.gpm {
    left: 420px;
    top: 0;
    width: 185px;
    height: 152px;
}

.cust {
    left: 183px;
    top: 169px;
    width: 151px;
    height: 152px;
}

.product {
    left: 454px;
    top: 169px;
    width: 151px;
    height: 152px;
}

.axis {
    font-size: 6px;
    fill: #7d6914;
}

.city .axis,
.legend {
    fill: #3c648f;
}

.legend {
    font-size: 7px;
}

.legend .strong {
    font-weight: 700;
    fill: #2b5480;
}

.axis-title {
    font-family: Roboto, "Open Sans", sans-serif;
    font-size: 8px;
    font-weight: 500;
    fill: #4a3b00;
}

.note {
    left: 22px;
    top: 303px;
    width: 147px;
    height: 77px;
    padding: 23px 10px 0 2px;
    font-family: "Open Sans", "Noto Sans", sans-serif;
    font-size: 9px;
    font-weight: 700;
    line-height: 13px;
    color: #3a2e00;
}

.note p {
    width: 132px;
}

.note .scroll {
    position: absolute;
    right: 3px;
    top: 3px;
    width: 4px;
    height: 70px;
    background: #c8c6c4;
}

/* double handled zoom sliders */
.range {
    position: absolute;
    height: 9px;
    background: linear-gradient(#5c4d10, #5c4d10) center / calc(100% - 8px) 2px no-repeat;
}

.range input {
    position: absolute;
    inset: 0;
    width: 100%;
    height: 9px;
    appearance: none;
    pointer-events: none;
}

.range input::-webkit-slider-thumb {
    appearance: none;
    width: 9px;
    height: 9px;
    border: 1px solid #5c4d10;
    border-radius: 50%;
    background: #fff;
    pointer-events: auto;
}

.range-x {
    left: 49px;
    top: 130px;
    width: 123px;
}

.range-y {
    left: 13px;
    top: 120px;
    width: 107px;
    transform: rotate(-90deg);
    transform-origin: 0 0;
}

.filters {
    flex: none;
    width: 21px;
    display: flex;
    flex-direction: column;
    align-items: center;
    gap: 9px;
    padding-top: 8px;
    border-left: 1px solid #c8c6c4;
    background: #fff;
}

.filters h2 {
    writing-mode: vertical-rl;
    font-family: "Open Sans", "Noto Sans", sans-serif;
    font-size: 9px;
    font-weight: 600;
    margin-top: -4px;
    color: #222;
}

/* page tabs */
.page-tabs {
    flex: none;
    height: 24px;
    display: flex;
    padding-left: 6px;
}

.device {
    width: 16px;
    margin: 0 6px 4px 0;
    border-bottom: 2px solid transparent;
}

.device.on {
    border-bottom-color: #117865;
    margin-right: 12px;
}

.step {
    width: 13px;
}

.tab {
    position: relative;
    width: 50px;
    background: #fff;
    border-left: 1px solid #c8c6c4;
    border-bottom: 1px solid #e1dfdd;
}

.tab.current {
    border-left-color: #e1dfdd;
    border-bottom: 2px solid #117865;
    color: #111;
    font-weight: 700;
}

.tab .x {
    position: absolute;
    right: 2px;
    top: 1px;
    font-weight: 400;
}

.add {
    width: 26px;
    background: #117865;
}

/* side panes */
.pane {
    flex: none;
    width: 118px;
    border-right: 1px solid #dddbd9;
}

.pane-head {
    display: flex;
    justify-content: space-between;
    align-items: center;
    height: 26px;
    padding: 0 5px 0 6px;
}

.pane-head h2 {
    font-family: "Open Sans", "Noto Sans", sans-serif;
    font-size: 10px;
    font-weight: 600;
    color: #222;
}

.build {
    padding-left: 6px;
    font-weight: 700;
    line-height: 8px;
}

.modes {
    display: flex;
    gap: 23px;
    padding: 4px 7px 0;
}

.modes .picked {
    background: #d2d0ce;
}

.divider {
    margin-top: 3px;
}

.divider svg {
    width: 100%;
    height: 7px;
}

.gallery {
    display: grid;
    grid-template-columns: repeat(6, 1fr);
    grid-template-rows: repeat(8, 1fr);
    height: 147px;
    margin: 3px 3px 0 5px;
    place-items: center;
}

.gallery svg {
    width: 14px;
    height: 14px;
}

.glyph {
    font-size: 12px;
    color: #2b7fb8;
}

.more {
    font-size: 12px;
}

.wells {
    padding: 8px 3px 0 4px;
}

.wells h3 {
    padding-left: 5px;
    line-height: 10px;
}

.wells h3 + .row {
    margin-top: 3px;
}

.well {
    width: 100%;
    height: 18px;
    margin: 4px 0 7px;
    background: #fff;
    border: 1px dotted #dddbd9;
    justify-content: flex-start;
    padding-left: 5px;
}

.row {
    display: flex;
    align-items: center;
    justify-content: space-between;
    height: 17px;
    padding: 0 10px 0 5px;
}

.row input {
    position: absolute;
    opacity: 0;
}

.toggle {
    width: 21px;
    height: 10px;
    display: flex;
    align-items: center;
    gap: 2px;
    padding: 0 2px;
    border: 1px solid #8a8886;
    border-radius: 5px;
    background: #fff;
    font-size: 6px;
}

.toggle::before {
    content: "";
    width: 5px;
    height: 5px;
    border-radius: 50%;
    background: #605e5c;
}

.toggle::after {
    content: "Off";
}

input:checked + .toggle {
    flex-direction: row-reverse;
    background: #117865;
    border-color: #117865;
    color: #fff;
}

input:checked + .toggle::before {
    background: #fff;
}

input:checked + .toggle::after {
    content: "On";
}

.find {
    display: flex;
    align-items: center;
    gap: 4px;
    height: 16px;
    margin: 4px 2px 0 3px;
    padding: 0 6px;
    background: #fff;
    border: 1px solid #e1dfdd;
    border-bottom-color: #a8a6a4;
    border-radius: 2px;
    font-size: 9px;
}

.tables {
    list-style: none;
    padding: 5px 0 0 9px;
}

.tables li {
    display: flex;
    align-items: center;
    gap: 3px;
    height: 16px;
}

/* status bar */
.status {
    flex: none;
    height: 15px;
    display: flex;
    align-items: center;
    justify-content: space-between;
    padding: 0 11px 0 3px;
    border-top: 1px solid #e1dfdd;
}

.zoom {
    display: flex;
    align-items: center;
    gap: 3px;
}

.zoom .pct {
    margin: 0 9px 0 5px;
}

.zoom input {
    width: 66px;
    height: 8px;
    appearance: none;
    background: linear-gradient(#8a8886, #8a8886) center / 100% 1px no-repeat;
}

.zoom input::-webkit-slider-thumb {
    appearance: none;
    width: 2px;
    height: 7px;
    background: #333;
}

/* taskbar */
.taskbar {
    flex: none;
    height: 32px;
    display: flex;
    align-items: center;
    padding-right: 12px;
    border-top: 1px solid #55534f;
    background: linear-gradient(to right, #eddce6 0%, #f0d6e2 18%, #ead9e0 24%, #e6ecb4 33%, #ecdfd0 40%, #efd7da 50%, #efd4e0 62%, #ddd8e2 72%, #dbe0dc 77%, #cfe8b4 84%, #d8e4d0 88%, #dbd6ea 94%, #dfd9ec 100%);
}

.weather {
    width: 215px;
    padding-left: 11px;
    gap: 2px;
    justify-content: flex-start;
    text-align: left;
}

.weather em {
    font-style: normal;
    color: #666;
}

.badge {
    font-size: 7px;
    fill: #fff;
}

.badge.tiny {
    font-size: 5px;
    font-weight: 700;
}

.app {
    position: relative;
    flex: none;
    width: 29px;
    height: 27px;
}

.apps {
    flex: none;
    width: 373px;
    display: flex;
}

.apps .app {
    flex: 1;
}

.app.run::after,
.app.here::after {
    content: "";
    position: absolute;
    bottom: 0;
    width: 4px;
    height: 2px;
    border-radius: 1px;
    background: #8a8886;
}

.app.here {
    background: rgba(255, 255, 255, .7);
    border-radius: 3px;
}

.app.here::after {
    width: 10px;
    background: #0f78c8;
}

.task-search {
    width: 142px;
    height: 20px;
    margin: 0 2px;
    padding: 0 3px 0 7px;
    display: flex;
    align-items: center;
    gap: 6px;
    border-radius: 10px;
    background: rgba(255, 255, 255, .75);
    font-size: 9px;
}

.flowers {
    width: 30px;
    height: 17px;
}

.tray {
    margin-left: auto;
    display: flex;
    align-items: center;
    gap: 6px;
}

.tray .i12,
.tray .lang {
    margin: 0 2px;
}

.battery {
    width: 14px;
    height: 10px;
}

.tray time {
    margin-left: 3px;
    text-align: right;
}
```
